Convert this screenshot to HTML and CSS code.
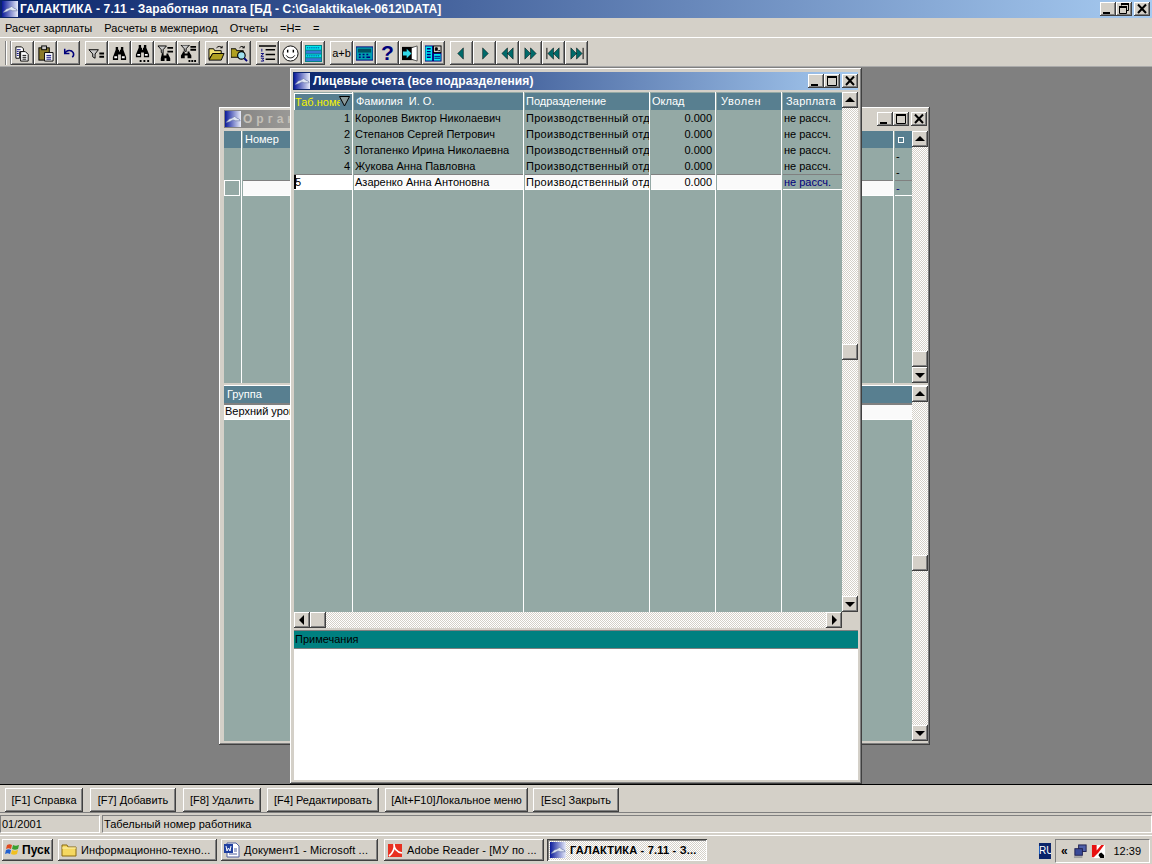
FILE: index.html
```html
<!DOCTYPE html>
<html lang="ru">
<head>
<meta charset="utf-8">
<title>ГАЛАКТИКА</title>
<link rel="stylesheet" href="styles.css">
</head>
<body>
<svg class="defs" width="0" height="0">
  <defs>
    <linearGradient id="lg" x1="0" x2="1" y1="0" y2="0"><stop offset="0" stop-color="#0a1a9a"/><stop offset="1" stop-color="#e8ecfa"/></linearGradient>
    <symbol id="gal" viewBox="0 0 18 18">
      <rect width="18" height="18" fill="url(#lg)"/>
      <path d="M1 13 L5 9 L8 8 L11 6 L13 8 L16 9 L17 11 L12 11 L9 10 L5 12 Z" fill="#dfe6f2" stroke="#5a6a9a" stroke-width=".6"/>
    </symbol>
    <symbol id="up" viewBox="0 0 16 16"><path d="M3 10 H13 L8 5 Z" fill="#000"/></symbol>
    <symbol id="down" viewBox="0 0 16 16"><path d="M3 6 H13 L8 11 Z" fill="#000"/></symbol>
    <symbol id="left" viewBox="0 0 16 16"><path d="M10 3 V13 L5 8 Z" fill="#000"/></symbol>
    <symbol id="right" viewBox="0 0 16 16"><path d="M6 3 V13 L11 8 Z" fill="#000"/></symbol>
    <symbol id="min" viewBox="0 0 16 14"><path d="M3 10 H10 V12 H3 Z" fill="#000"/></symbol>
    <symbol id="max" viewBox="0 0 16 14"><path d="M3.500 2.500 H12.500 V11.500 H3.500 Z" fill="none" stroke="#000"/><path d="M3 2 H13 V4 H3 Z" fill="#000"/></symbol>
    <symbol id="rest" viewBox="0 0 16 14"><path d="M5.500 1.500 H12.500 V8.500 H10.500 M5.500 1.500 V3.500 M3.500 4.500 H10.500 V11.500 H3.500 Z" fill="none" stroke="#000"/><path d="M5 1 H13 V3 H5 Z M3 4 H11 V6 H3 Z" fill="#000"/></symbol>
    <symbol id="close" viewBox="0 0 16 14"><path d="M4 2.500 L12 11 M12 2.500 L4 11" stroke="#000" stroke-width="2" fill="none"/></symbol>
  </defs>
</svg>

<div class="app">
  <header class="apptitle">
    <svg class="appicon"><use href="#gal"/></svg>
    <span class="apptitle-text">ГАЛАКТИКА - 7.11 - Заработная плата [БД - C:\Galaktika\ek-0612\DATA]</span>
    <div class="wbtns">
      <span class="wbtn"><svg><use href="#min"/></svg></span><span class="wbtn"><svg><use href="#rest"/></svg></span><span class="wbtn wbtn-x"><svg><use href="#close"/></svg></span>
    </div>
  </header>

  <nav class="menu">
    <span>Расчет зарплаты</span><span>Расчеты в межпериод</span><span>Отчеты</span><span>=H=</span><span>=</span>
  </nav>

  <div class="toolbar">
    <i class="grip"></i>
    <div class="tgroup">
      <b class="tb"><svg viewBox="0 0 18 18"><path d="M2 2h6l2 2v3H6v7H2z" fill="#fff" stroke="#000"/><path d="M7 7h5l3 3v7H7z" fill="#fff" stroke="#000"/><path d="M9 11h4M9 13h4M9 15h4" stroke="#000" stroke-width="1"/><path d="M3 5h4M3 7h2M3 9h2M3 11h2" stroke="#00007a"/></svg></b>
      <b class="tb"><svg viewBox="0 0 18 18"><rect x="2" y="3" width="11" height="13" fill="#8a7a2a" stroke="#000"/><rect x="5" y="1" width="5" height="4" fill="#c8c8c8" stroke="#000"/><path d="M8 8h9v9H8z" fill="#fff" stroke="#000"/><path d="M10 11h5M10 13h5M10 15h5" stroke="#00007a"/></svg></b>
      <b class="tb"><svg viewBox="0 0 18 18"><path d="M5 4v5h5" fill="none" stroke="#00007a" stroke-width="1.600"/><path d="M5 9C7 5 12 5 14 8c1 2 0 4-1 5" fill="none" stroke="#00007a" stroke-width="1.600"/></svg></b>
    </div>
    <div class="tgroup">
      <b class="tb"><svg viewBox="0 0 18 18"><path d="M1 5h10L7.500 9.500V14L5 12.500V9.500Z" fill="#c8c8c8" stroke="#000"/><path d="M12 8h5v2h-5zM12 11.500h5v2h-5z"/></svg></b>
      <b class="tb"><svg viewBox="0 0 18 18"><path d="M5 2h2.500v3H8.500V7h1V5h1V2H13v3l3 8v3H10.500V10H7.500v6H2v-3l3-8z" fill="#000"/><path d="M3.500 12h3v2h-3zM11.500 12h3v2h-3z" fill="#fff"/></svg></b>
      <b class="tb"><svg viewBox="0 0 18 18"><path d="M5 0h2.500v3H8.500V5h1V3h1V0H13v3l3 7v3H10.500V8H7.500v5H2v-3l3-7z" fill="#000"/><path d="M3.500 9.500h3v2h-3zM11.500 9.500h3v2h-3z" fill="#fff"/><path d="M6 16h2v2H6zM10 16h2v2h-2zM14 16h2v2h-2z"/></svg></b>
      <b class="tb"><svg viewBox="0 0 18 18"><path d="M1 1h9L6.500 5V9L4.500 8V5Z" fill="#c8c8c8" stroke="#000"/><path d="M11 2h6v2h-6zM11 6h6v2h-6z"/><path d="M5 9h2v2h3V9h2v1l2 4v3h-4v-3H8v3H4v-3l1-4z"/></svg></b>
      <b class="tb"><svg viewBox="0 0 18 18"><path d="M1 0h9L6.500 4V7L4.500 6V4Z" fill="#c8c8c8" stroke="#000"/><path d="M11 1h6v2h-6zM11 4h6v2h-6z"/><path d="M3 7h2v2h3V7h2v1l2 3v3H8v-3H5v3H1v-3l2-3z"/><path d="M12 16h2v2h-2zM15 16h2v2h-2zM9 16h2v2H9z"/></svg></b>
    </div>
    <div class="tgroup">
      <b class="tb"><svg viewBox="0 0 18 18"><path d="M1 4h5l1 2h7v3H5L1 15z" fill="#f0e070" stroke="#000"/><path d="M5 9h12l-3 7H1z" fill="#b0a020" stroke="#000"/><path d="M9 3c2-2 4-2 6 0M15 3v-2M15 3h-2" fill="none" stroke="#000"/></svg></b>
      <b class="tb"><svg viewBox="0 0 18 18"><path d="M0 4h5l1 2h7v7H0z" fill="#b0a020" stroke="#000"/><path d="M9 3c2-2 3-2 5 0M14 3v-2M14 3h-2" fill="none" stroke="#000"/><circle cx="11" cy="11" r="4" fill="#9fe0f0" stroke="#000" stroke-width="1.200"/><path d="M14 14l3 3" stroke="#00007a" stroke-width="2"/></svg></b>
    </div>
    <div class="tgroup">
      <b class="tb"><svg viewBox="0 0 18 18"><path d="M0 1h18M7 5h10M7 10h10M7 15h10" stroke="#000" stroke-width="1.500"/><path d="M3 4v3M2 9h3l-3 3h3M2 14h3l-1 1.500 1 1.500H2" fill="none" stroke="#00007a"/></svg></b>
      <b class="tb"><svg viewBox="0 0 18 18"><circle cx="9" cy="9" r="8" fill="#fff" stroke="#000"/><path d="M6 5v3M12 5v3" stroke="#000" stroke-width="1.500"/><path d="M4.500 11c2 3.500 7 3.500 9 0" fill="none" stroke="#000"/></svg></b>
      <b class="tb"><svg viewBox="0 0 18 18"><rect x="0" y="0" width="18" height="18" fill="#008080"/><rect x="1" y="1" width="16" height="4" fill="#00e8f0"/><path d="M2 3h14" stroke="#00007a" stroke-dasharray="1 1"/><rect x="1" y="6" width="16" height="3" fill="#3878d8"/><rect x="1" y="10" width="16" height="3" fill="#00e8f0"/><path d="M2 11.500h14" stroke="#00007a" stroke-dasharray="1 1"/><rect x="1" y="14" width="16" height="3" fill="#3878d8"/></svg></b>
    </div>
    <div class="tgroup">
      <b class="tb tb-text">a+b</b>
      <b class="tb"><svg viewBox="0 0 18 18"><rect x="0" y="2" width="18" height="14" fill="#00a0b0" stroke="#00007a"/><rect x="2" y="4" width="14" height="4" fill="#005060"/><path d="M3 10h2M7 10h2M11 10h2M3 13h2M7 13h2M11 13h4" stroke="#00007a" stroke-width="1.500"/></svg></b>
      <b class="tb tb-q">?</b>
      <b class="tb"><svg viewBox="0 0 18 18"><path d="M0 2h16v14H0z" fill="#000"/><path d="M10 3l6-2v16l-6-2z" fill="#fff" stroke="#000" stroke-width=".6"/><path d="M1 7h4V4l5 5-5 5v-3H1z" fill="#30d8e8"/></svg></b>
      <b class="tb"><svg viewBox="0 0 18 18"><rect x="0" y="1" width="8" height="16" fill="#00e8f0" stroke="#00007a"/><path d="M2 4h4M2 7h4M2 10h4M2 13h4" stroke="#00007a" stroke-width="1.500"/><rect x="9" y="1" width="8" height="7" fill="#d4d0c8" stroke="#000"/><path d="M11 6V3h2v3M14 6h2" stroke="#000"/><rect x="9" y="9" width="8" height="8" fill="#00e8f0" stroke="#00007a"/><path d="M10 12h6M10 14h6" stroke="#00007a"/></svg></b>
    </div>
    <div class="tgroup">
      <b class="tb"><svg viewBox="0 0 18 18"><path d="M11 3v12L5 9z" fill="#006a6a" stroke="#000" stroke-width=".5"/></svg></b>
      <b class="tb"><svg viewBox="0 0 18 18"><path d="M7 3v12l6-6z" fill="#006a6a" stroke="#000" stroke-width=".5"/></svg></b>
      <b class="tb"><svg viewBox="0 0 18 18"><path d="M9 3v12L3 9zM15 3v12L9 9z" fill="#006a6a" stroke="#000" stroke-width=".5"/></svg></b>
      <b class="tb"><svg viewBox="0 0 18 18"><path d="M3 3v12l6-6zM9 3v12l6-6z" fill="#006a6a" stroke="#000" stroke-width=".5"/></svg></b>
      <b class="tb"><svg viewBox="0 0 18 18"><path d="M2 3v12" stroke="#000"/><path d="M9 3v12L3 9zM15 3v12L9 9z" fill="#006a6a" stroke="#000" stroke-width=".5"/></svg></b>
      <b class="tb"><svg viewBox="0 0 18 18"><path d="M16 3v12" stroke="#000"/><path d="M3 3v12l6-6zM9 3v12l6-6z" fill="#006a6a" stroke="#000" stroke-width=".5"/></svg></b>
    </div>
  </div>

  <main class="desktop">
    <!-- back window -->
    <section class="win win-back">
      <div class="wtitle wtitle-off">
        <svg class="appicon"><use href="#gal"/></svg>
        <span class="wtitle-text spaced">Организации</span>
        <div class="wbtns wbtns-back"><span class="wbtn"><svg><use href="#min"/></svg></span><span class="wbtn"><svg><use href="#max"/></svg></span><span class="wbtn wbtn-x"><svg><use href="#close"/></svg></span></div>
      </div>
      <div class="pane pane-top">
        <div class="grid">
          <div class="col cw-a"><div class="hd"></div><div class="cell"></div><div class="cell"></div><div class="cell cell-box"></div></div>
          <div class="col cw-b"><div class="hd">Номер</div><div class="cell"></div><div class="cell"></div><div class="cell cell-sel"></div></div>
          <div class="col cw-c col-last"><div class="hd hd-box"><i class="hbox"></i></div><div class="cell">-</div><div class="cell">-</div><div class="cell cell-navy">-</div></div>
        </div>
        <div class="vscroll">
          <span class="sb"><svg><use href="#up"/></svg></span>
          <span class="track track-a"></span>
          <span class="sb"></span>
          <span class="sb"><svg><use href="#down"/></svg></span>
        </div>
      </div>
      <div class="pane pane-bottom">
        <div class="grid grid-group">
          <div class="hd hd-wide">Группа</div>
          <div class="cell cell-sel cell-line">Верхний уровень</div>
        </div>
        <div class="vscroll">
          <span class="sb"><svg><use href="#up"/></svg></span>
          <span class="track track-b"></span>
          <span class="sb"></span>
          <span class="track"></span>
          <span class="sb"><svg><use href="#down"/></svg></span>
        </div>
      </div>
    </section>

    <!-- front window -->
    <section class="win win-main">
      <div class="wtitle wtitle-on">
        <svg class="appicon"><use href="#gal"/></svg>
        <span class="wtitle-text">Лицевые счета (все подразделения)</span>
        <div class="wbtns wbtns-main"><span class="wbtn"><svg><use href="#min"/></svg></span><span class="wbtn"><svg><use href="#max"/></svg></span><span class="wbtn wbtn-x"><svg><use href="#close"/></svg></span></div>
      </div>
      <div class="wbody">
        <div class="pane pane-main">
          <div class="grid">
            <div class="col c1">
              <div class="hd hd-active"><span class="hd-yellow">Таб.номер</span><svg class="funnel" viewBox="0 0 11 11"><path d="M.5.5h10L5.500 10z" fill="#8a9a9a" stroke="#000"/></svg></div>
              <div class="cell r">1</div><div class="cell r">2</div><div class="cell r">3</div><div class="cell r">4</div>
              <div class="cell cell-sel cell-cur"><i class="caret"></i>5</div>
            </div>
            <div class="col c2">
              <div class="hd">Фамилия&nbsp; И. О.</div>
              <div class="cell">Королев Виктор Николаевич</div><div class="cell">Степанов Сергей Петрович</div><div class="cell">Потапенко Ирина Николаевна</div><div class="cell">Жукова Анна Павловна</div>
              <div class="cell cell-sel">Азаренко Анна Антоновна</div>
            </div>
            <div class="col c3">
              <div class="hd">Подразделение</div>
              <div class="cell">Производственный отдел</div><div class="cell">Производственный отдел</div><div class="cell">Производственный отдел</div><div class="cell">Производственный отдел</div>
              <div class="cell cell-sel">Производственный отдел</div>
            </div>
            <div class="col c4">
              <div class="hd">Оклад</div>
              <div class="cell r">0.000</div><div class="cell r">0.000</div><div class="cell r">0.000</div><div class="cell r">0.000</div>
              <div class="cell r cell-sel">0.000</div>
            </div>
            <div class="col c5">
              <div class="hd hd-airy">Уволен</div>
              <div class="cell"></div><div class="cell"></div><div class="cell"></div><div class="cell"></div>
              <div class="cell cell-sel"></div>
            </div>
            <div class="col c6 col-last">
              <div class="hd hd-pay">Зарплата</div>
              <div class="cell">не рассч.</div><div class="cell">не рассч.</div><div class="cell">не рассч.</div><div class="cell">не рассч.</div>
              <div class="cell cell-navy">не рассч.</div>
            </div>
          </div>
          <div class="vscroll">
            <span class="sb"><svg><use href="#up"/></svg></span>
            <span class="track track-c"></span>
            <span class="sb"></span>
            <span class="track"></span>
            <span class="sb"><svg><use href="#down"/></svg></span>
          </div>
        </div>
        <div class="hscroll">
          <span class="sb"><svg><use href="#left"/></svg></span>
          <span class="sb"></span>
          <span class="track"></span>
          <span class="sb"><svg><use href="#right"/></svg></span>
          <span class="corner"></span>
        </div>
        <div class="notes">
          <div class="notes-head">Примечания</div>
          <div class="notes-body"></div>
        </div>
      </div>
    </section>
  </main>

  <div class="fkeys">
    <button class="fk fk1">[F1] Справка</button>
    <button class="fk fk2">[F7] Добавить</button>
    <button class="fk fk3">[F8] Удалить</button>
    <button class="fk fk4">[F4] Редактировать</button>
    <button class="fk fk5">[Alt+F10]Локальное меню</button>
    <button class="fk fk6">[Esc] Закрыть</button>
  </div>

  <div class="status">
    <div class="st st-a">01/2001</div>
    <div class="st st-b">Табельный номер работника</div>
  </div>

  <footer class="taskbar">
    <button class="tk tk-start">
      <svg class="tk-ic" viewBox="0 0 16 16"><path d="M2 3c2-1 3-1 5 0L6 7C4 6 3 6 1 7z" fill="#e04a20"/><path d="M8 3c2 1 3 1 6 0l-1 4c-2 1-4 1-6 0z" fill="#3aa030"/><path d="M1 8c2-1 3-1 5 0l-1 4c-2-1-3-1-5 0z" fill="#2060d0"/><path d="M7 8c2 1 3 1 6 0l-1 4c-2 1-4 1-6 0z" fill="#f0c020"/></svg>
      <strong>Пуск</strong>
    </button>
    <button class="tk tk-1">
      <svg class="tk-ic" viewBox="0 0 16 16"><path d="M1 3h5l1 2h8v9H1z" fill="#f5d860" stroke="#8a6a10"/><path d="M1 6h14" stroke="#fff3b0"/></svg>
      <span>Информационно-техно...</span>
    </button>
    <button class="tk tk-2">
      <svg class="tk-ic" viewBox="0 0 16 16"><path d="M3 1h9l3 3v11H3z" fill="#fff" stroke="#5060a0"/><rect x="0" y="2" width="9" height="9" fill="#2040a0"/><path d="M2 4l1 5 1.500-3L6 9l1-5" fill="none" stroke="#fff"/><path d="M10 7h3M10 9h3M5 12h8" stroke="#5060a0"/></svg>
      <span>Документ1 - Microsoft ...</span>
    </button>
    <button class="tk tk-3">
      <svg class="tk-ic" viewBox="0 0 16 16"><path d="M1 2h14v13H1z" fill="#e83020"/><path d="M2 14C6 11 8 6 7 2c0 5 3 8 8 9" fill="none" stroke="#fff" stroke-width="1.600"/></svg>
      <span>Adobe Reader - [МУ по ...</span>
    </button>
    <button class="tk tk-4 tk-on">
      <svg class="tk-ic"><use href="#gal"/></svg>
      <strong>ГАЛАКТИКА - 7.11 - З...</strong>
    </button>
    <div class="tray-wrap">
      <span class="lang">RU</span>
      <div class="tray">
        <span class="chev">«</span>
        <svg class="tray-ic" viewBox="0 0 16 16"><rect x="6" y="1" width="8" height="7" fill="#5060a8" stroke="#202050"/><rect x="2" y="5" width="8" height="7" fill="#3a4a98" stroke="#202050"/><path d="M1 14h9" stroke="#a0a0a0" stroke-width="2"/></svg>
        <svg class="tray-ic" viewBox="0 0 16 16"><rect width="14" height="14" x="1" y="1" fill="#fff"/><path d="M1 1h5v6l5-6h3L8 9 3 14H1z" fill="#e81010"/><path d="M9 10l2-1 3 3v3h-4l-2-3z"/></svg>
        <span class="clock">12:39</span>
      </div>
    </div>
  </footer>
</div>
</body>
</html>
```

FILE: styles.css
```css
* { box-sizing: border-box; }
html, body { margin: 0; padding: 0; }
body { width: 1152px; height: 864px; overflow: hidden; font: 11px/14px "Liberation Sans", Arial, sans-serif; color: #000; background: #d4d0c8; }
.defs { position: absolute; }
.app { display: flex; flex-direction: column; height: 864px; }

/* Title bars */
.apptitle { height: 18px; display: flex; align-items: center; padding-left: 1px; background: linear-gradient(90deg, #0a246a 0%, #a6caf0 100%); }
.appicon { width: 18px; height: 16px; flex: none; }
.apptitle-text { margin-left: 1px; color: #fff; font: bold 12px/16px "Liberation Sans", sans-serif; letter-spacing: .12px; white-space: nowrap; }
.wbtns { margin-left: auto; display: flex; padding-right: 2px; }
.wbtn { width: 16px; height: 14px; background: #d4d0c8; display: block; box-shadow: inset -1px -1px #404040, inset 1px 1px #fff, inset -2px -2px #808080; }
.wbtn svg { width: 16px; height: 14px; display: block; }
.wbtn-x { margin-left: 2px; }

/* Menu */
.menu { height: 20px; display: flex; align-items: center; padding-left: 5px; gap: 12px; letter-spacing: .05px; white-space: nowrap; border-bottom: 1px solid #fff; }

/* Toolbar */
.toolbar { height: 30px; display: flex; padding: 3px 0 0 5px; align-items: flex-start; border-bottom: 1px solid #808080; box-shadow: inset 0 -1px #aaa; }
.grip { width: 6px; height: 24px; border-left: 1px solid #808080; border-right: 1px solid #808080; box-shadow: inset 1px 0 #fff; flex: none; }
.tgroup { display: flex; margin-right: 5px; }
.tb { width: 23px; height: 24px; display: flex; align-items: center; justify-content: center; background: #d4d0c8; box-shadow: inset -1px -1px #404040, inset 1px 1px #fff, inset -2px -2px #808080; font-weight: normal; }
.tb svg { width: 17px; height: 17px; }
.tb-text { font: 11px/16px "Liberation Sans", sans-serif; }
.tb-q { font: bold 21px/20px "Liberation Sans", sans-serif; color: #00007a; }

/* Desktop and windows */
.desktop { position: relative; height: 717px; background: #808080; border-bottom: 1px solid #000; }
.win { position: absolute; display: flex; flex-direction: column; background: #d4d0c8; box-shadow: inset -1px -1px #404040, inset 1px 1px #fff, inset -2px -2px #808080; }
.win-back { left: 219px; top: 39px; width: 711px; height: 638px; padding: 3px 2px 0 5px; }
.win-main { left: 290px; top: 0; width: 572px; height: 716px; padding: 4px 0 0 3px; }
.wtitle { height: 18px; display: flex; align-items: center; flex: none; }
.wtitle-on { width: 565px; background: linear-gradient(90deg, #0a246a 0%, #a6caf0 100%); }
.wtitle-off { width: 704px; background: linear-gradient(90deg, #808080 0%, #d4d0c8 30%); }
.wtitle-text { margin-left: 2px; color: #fff; font: bold 12px/16px "Liberation Sans", sans-serif; letter-spacing: .1px; white-space: nowrap; }
.spaced { letter-spacing: 4px; color: #c4c0b8; margin-left: 1px; }
.wbtns-main { padding-right: 0; }
.wbtns-back { padding-right: 1px; }

/* Grid */
.wbody { margin-left: 1px; width: 564px; display: flex; flex-direction: column; flex: 1; }
.pane { display: flex; flex: none; }
.pane-main { height: 520px; margin-top: 2px; }
.pane-top { height: 252px; margin-top: 3px; }
.pane-bottom { height: 356px; margin-top: 2px; border-top: 1px solid #fff; }
.grid { flex: 1; display: flex; background: #94a9a5; min-width: 0; overflow: hidden; }
.grid-group { display: block; position: relative; }
.col { flex: none; display: flex; flex-direction: column; border-right: 1px solid #fff; margin-right: 1px; padding-top: 1px; }
.col-last { border-right: 0; margin-right: 0; }
.pane-top .col { padding-top: 0; }
.c1 { width: 59px; } .c2 { width: 170px; } .c3 { width: 125px; } .c4 { width: 65px; } .c5 { width: 65px; } .c6 { width: 60px; }
.cw-a { width: 18px; } .cw-b { width: 651px; } .cw-c { width: 17px; }
.hd { height: 17px; line-height: 17px; padding-left: 2px; background: #587f90; color: #fff; white-space: nowrap; overflow: hidden; display: flex; align-items: center; flex: none; }
.c3 .hd, .c4 .hd { padding-left: 1px; }
.c3 .cell { letter-spacing: .3px; }
.c4 .r { padding-right: 3px; }
.c5 .hd-airy { letter-spacing: .6px; padding-left: 4px; }
.c6 .hd-pay { letter-spacing: .2px; padding-left: 3px; }
.hd-wide { height: 18px; border-bottom: 1px solid #808080; padding-left: 3px; }
.hd-active { border: 1px solid #fff; border-right: 0; border-bottom: 0; padding-left: 0; position: relative; }
.hd-yellow { color: #f4f400; width: 45px; overflow: hidden; flex: none; }
.funnel { position: absolute; right: 2px; top: 2px; width: 11px; height: 11px; }
.hd-box { padding: 0 0 0 3px; }
.hbox { width: 6px; height: 6px; border: 1px solid #fff; display: block; }
.cell { height: 16px; line-height: 16px; padding-left: 1px; white-space: nowrap; overflow: hidden; flex: none; }
.r { text-align: right; padding: 0 2px 0 0; }
.cell-sel { background: #fafafa; border-top: 1px solid #808080; border-bottom: 1px solid #fff; line-height: 15px; }
.cell-navy { color: #00007a; border-top: 1px solid #808080; border-bottom: 1px solid #fff; line-height: 15px; }
.cell-box { border: 1px solid #fff; margin-right: 1px; }
.cell-cur { position: relative; background: #fff; padding-left: 1px; }
.caret { position: absolute; left: 0; top: 0; width: 2px; height: 14px; background: #000; }
.cell-line { line-height: 12px; }

/* Scrollbars */
.vscroll { width: 16px; flex: none; display: flex; flex-direction: column; }
.hscroll { height: 16px; flex: none; display: flex; }
.sb { width: 16px; height: 16px; flex: none; background: #d4d0c8; box-shadow: inset -1px -1px #404040, inset 1px 1px #fff, inset -2px -2px #808080; display: block; }
.sb svg { width: 16px; height: 16px; display: block; }
.track { flex: 1; background: repeating-conic-gradient(#fff 0 25%, #d4d0c8 0 50%) 0 0 / 2px 2px; display: block; }
.track-b { flex: none; height: 153px; }
.track-c { flex: none; height: 236px; }
.corner { width: 16px; height: 16px; background: #d4d0c8; flex: none; }

/* Notes */
.notes { margin-top: 2px; display: flex; flex-direction: column; flex: 1; margin-bottom: 4px; border-top: 1px solid #808080; }
.notes-head { height: 18px; line-height: 16px; background: #008080; padding-left: 1px; border-bottom: 1px solid #808080; flex: none; }
.notes-body { flex: 1; background: #fff; }

/* Function keys */
.fkeys { height: 28px; display: flex; padding-top: 3px; padding-left: 5px; border-bottom: 1px solid #808080; flex: none; }
.fk { height: 24px; padding: 0; font: 11px/14px "Liberation Sans", sans-serif; border: 0; background: #d4d0c8; color: #000; flex: none; box-shadow: inset -1px -1px #404040, inset 1px 1px #fff, inset -2px -2px #808080; }
.fk1 { width: 78px; margin-right: 7px; } .fk2 { width: 86px; margin-right: 7px; } .fk3 { width: 78px; margin-right: 6px; } .fk4 { width: 112px; margin-right: 6px; } .fk5 { width: 143px; margin-right: 5px; } .fk6 { width: 86px; }

/* Status */
.status { height: 22px; display: flex; padding-top: 2px; gap: 2px; flex: none; }
.st { height: 18px; line-height: 17px; padding-left: 1px; border-right: 1px solid #fff; border-bottom: 1px solid #fff; border-top: 1px solid #808080; border-left: 1px solid #808080; }
.st-a { width: 100px; }
.st-b { flex: 1; }

/* Taskbar */
.taskbar { flex: 1; display: flex; align-items: flex-start; padding: 3px 0 0 2px; border-top: 1px solid #fff; box-shadow: inset 0 1px #d4d0c8; }
.tk { height: 22px; display: flex; align-items: center; border: 0; padding: 0 0 0 3px; background: #d4d0c8; font: 11px/14px "Liberation Sans", sans-serif; letter-spacing: .1px; color: #000; white-space: nowrap; overflow: hidden; box-shadow: inset -1px -1px #404040, inset 1px 1px #fff, inset -2px -2px #808080; flex: none; }
.tk-ic { width: 16px; height: 16px; flex: none; margin-right: 4px; }
.tk strong { font: bold 11px/14px "Liberation Sans", sans-serif; letter-spacing: .2px; }
.tk-start { width: 51px; margin-right: 5px; }
.tk-start .tk-ic { margin-right: 1px; }
.tk-start strong { font-size: 12px; letter-spacing: 0; }
.tk-1 { width: 159px; margin-right: 4px; }
.tk-2 { width: 157px; margin-right: 6px; }
.tk-3 { width: 160px; margin-right: 3px; }
.tk-4 { width: 160px; }
.tk-on { background: repeating-conic-gradient(#fff 0 25%, #d4d0c8 0 50%) 0 0 / 2px 2px; box-shadow: inset 1px 1px #404040, inset -1px -1px #fff, inset 2px 2px #808080; }
.tray-wrap { margin-left: auto; display: flex; align-items: center; padding-right: 2px; }
.lang { width: 12px; height: 16px; background: #0a246a; color: #fff; line-height: 16px; font-size: 10px; overflow: hidden; margin-right: 4px; text-align: center; }
.tray { width: 95px; height: 24px; display: flex; align-items: center; padding-left: 5px; border: 1px solid; border-color: #808080 #fff #fff #808080; }
.chev { font-weight: bold; font-size: 12px; width: 12px; }
.tray-ic { width: 15px; height: 15px; margin-right: 3px; flex: none; }
.clock { margin-left: auto; margin-right: 8px; }
```
